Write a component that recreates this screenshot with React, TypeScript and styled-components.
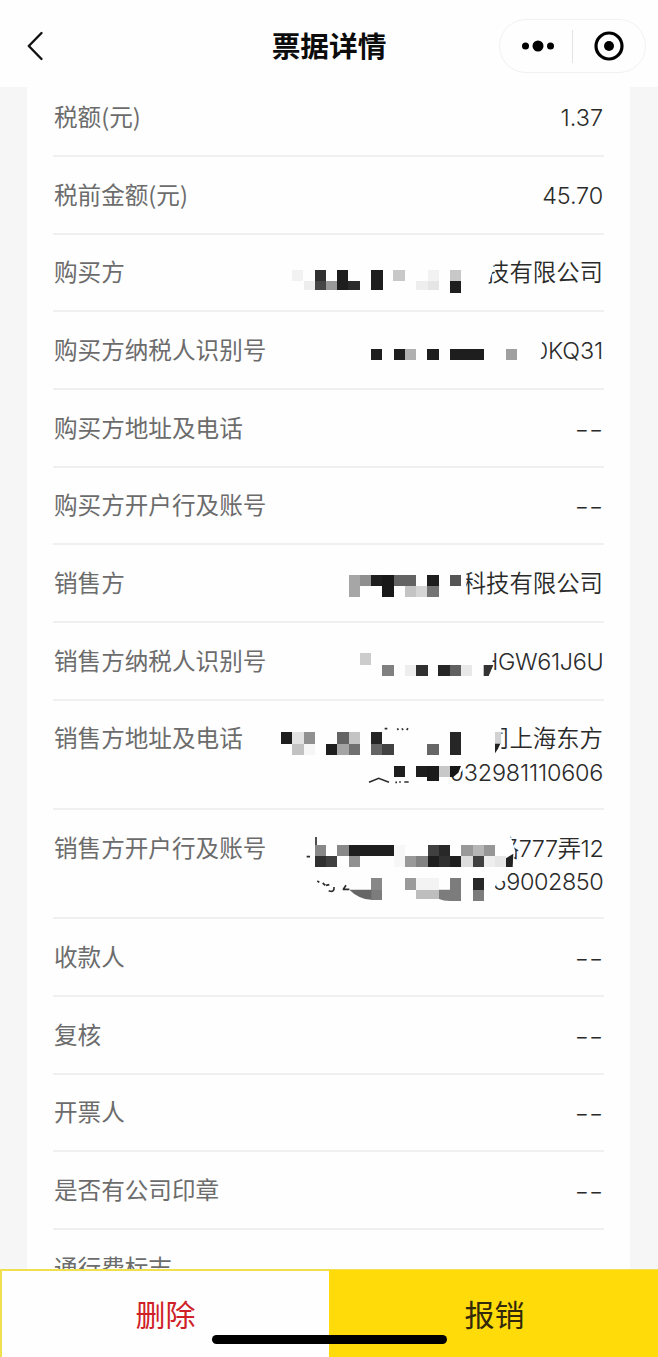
import React from 'react';
import styled, { createGlobalStyle } from 'styled-components';

const GlobalStyle = createGlobalStyle`
  * { box-sizing: border-box; }
  body { margin: 0; background: #f6f6f6; font-family: Inter, "Noto Sans CJK SC", sans-serif; }
`;

const Screen = styled.div`
  display: flex;
  flex-direction: column;
  height: 1357px;
  overflow: hidden;
  background: #f6f6f6;
`;

const Header = styled.header`
  display: grid;
  grid-template-columns: 1fr auto 1fr;
  align-items: center;
  flex: none;
  height: 87px;
  padding: 5px 12px 0 12px;
  background: #fefefe;
`;

const BackButton = styled.button`
  display: flex;
  width: 20px;
  margin-left: 14px;
  padding: 0;
  border: 0;
  background: none;
`;

const Title = styled.h1`
  margin: 0;
  padding-top: 2px;
  font-size: 28.7px;
  line-height: 40px;
  font-weight: 600;
  color: #0c0c0c;
`;

const Capsule = styled.div`
  display: flex;
  align-items: center;
  justify-self: end;
  width: 147px;
  height: 54px;
  border: 1px solid #f1f1f1;
  border-radius: 27px;
`;

const CapsuleButton = styled.button`
  display: flex;
  flex: 0 0 72px;
  align-items: center;
  justify-content: center;
  padding: 0;
  border: 0;
  background: none;

  &:first-child { padding-left: 4px; }
`;

const CapsuleDivider = styled.span`
  width: 1px;
  height: 33px;
  background: #e3e3e3;
`;

const Card = styled.main`
  flex: 1;
  min-height: 0;
  margin: 0 28px 0 27px;
  padding: 0 26px;
  overflow: hidden;
  background: #fefefe;
`;

const Row = styled.div<{ $first?: boolean }>`
  position: relative;
  display: flex;
  justify-content: space-between;
  min-height: ${(p) => (p.$first ? 70 : 77.68)}px;
  padding: ${(p) => (p.$first ? 13 : 20.7)}px 0 19.2px;
  border-bottom: 2px solid #f0f0f0;
`;

const Label = styled.span`
  padding-left: 1px;
  font-family: "Noto Sans CJK SC", sans-serif;
  font-size: 23.6px;
  line-height: 33.2px;
  color: #6c6c6c;
`;

const Value = styled.span`
  display: flex;
  flex-direction: column;
  align-items: flex-end;
  padding: 1px 1px 0 0;
  font-size: 23.4px;
  font-weight: 350;
  line-height: 33.2px;
  color: #2a2a2a;
  white-space: nowrap;
`;

const Line = styled.span<{ $spacing: number }>`
  margin-right: ${(p) => p.$spacing}px;
  letter-spacing: ${(p) => p.$spacing}px;
`;

const EmptyMark = styled.span`
  padding-top: 1px;
  transform: scaleX(1.34);
  transform-origin: right;
`;

const Mosaic = styled.svg<{ $top: number }>`
  position: absolute;
  right: -16px;
  top: ${(p) => p.$top}px;
`;

const Footer = styled.footer`
  position: relative;
  display: flex;
  flex: none;
  height: 88px;
`;

const Action = styled.button<{ $primary?: boolean }>`
  flex: none;
  width: 50%;
  padding: ${(p) => (p.$primary ? '0 0 2px 2px' : '0 0 3px')};
  border: 0 solid #f0df4e;
  border-width: ${(p) => (p.$primary ? '1px 0 0' : '2px 0 0 2px')};
  background: ${(p) => (p.$primary ? '#ffdb0a' : '#fefefe')};
  color: ${(p) => (p.$primary ? '#33290a' : '#cf2027')};
  font-family: "Noto Sans CJK SC", sans-serif;
  font-size: 30px;
  line-height: 40px;
`;

const HomeIndicator = styled.span`
  position: absolute;
  left: 212px;
  bottom: 13px;
  width: 235px;
  height: 9px;
  border-radius: 5px;
  background: #000;
`;

/* x, y, width, height, fill; three units to a pixel */
type Cell = [number, number, number, number, string];

interface Redaction {
  width: number;
  height: number;
  top: number;
  covers: string[];
  cells: Cell[];
  strokes?: string;
  shapes?: [string, string][];
}

interface Entry {
  label: string;
  lines: string[];
  spacing?: number[];
  redaction?: Redaction;
}

const D = '#1e1e1e';

const buyer: Redaction = {
  width: 350, height: 70, top: 0.5,
  covers: ['M630 60H668L671 100L660 132L650 160H630Z'],
  cells: [
    [66, 105, 34, 33, '#f2f2f2'], [101, 138, 34, 26, '#eeeeee'],
    [135, 105, 33, 33, '#303030'], [135, 138, 33, 26, '#464646'],
    [168, 138, 34, 26, '#999999'], [202, 105, 33, 59, D], [235, 138, 35, 26, '#2a2a2a'],
    [303, 105, 35, 59, D], [370, 105, 35, 33, '#c8c8c8'],
    [438, 138, 35, 26, '#eeeeee'], [473, 105, 33, 33, '#f2f2f2'], [473, 138, 33, 26, '#e5e5e5'],
    [540, 105, 34, 33, '#c8c8c8'], [540, 138, 34, 35, D],
  ],
};

const buyerTax: Redaction = {
  width: 270, height: 70, top: 7.8,
  covers: ['M520 50H572L578 78L576 105L567 130H520Z'],
  cells: [
    [63, 87, 34, 33, D], [131, 87, 34, 33, D], [165, 87, 33, 33, '#b0b0b0'],
    [232, 87, 34, 33, D], [300, 87, 101, 33, D], [468, 87, 34, 33, '#a0a0a0'],
  ],
};

const seller: Redaction = {
  width: 290, height: 60, top: 10.3,
  covers: ['M380 40H409V125H380Z'],
  cells: [
    [56, 57, 34, 66, '#a6a6a6'], [90, 57, 33, 33, '#8f8f8f'], [123, 57, 34, 33, D],
    [157, 57, 34, 66, '#181818'], [191, 57, 67, 33, '#636363'],
    [225, 90, 33, 33, '#c4c4c4'], [258, 90, 34, 33, '#d5d5d5'],
    [292, 57, 34, 33, D], [292, 90, 34, 33, '#747474'], [360, 57, 33, 33, '#555555'],
  ],
};

const sellerTax: Redaction = {
  width: 280, height: 60, top: 12.6,
  covers: ['M400 35H458V120H400Z'],
  cells: [
    [60, 52, 34, 34, '#cccccc'], [127, 87, 34, 33, '#808080'],
    [195, 87, 33, 33, '#eeeeee'], [228, 87, 35, 33, '#303030'],
    [295, 87, 35, 33, '#262626'], [330, 87, 33, 33, '#606060'], [363, 87, 33, 33, '#e8e8e8'],
  ],
  shapes: [['M431 87H460L446 120H431Z', '#333333']],
};

const sellerAddress: Redaction = {
  width: 360, height: 80, top: 14.8,
  covers: ['M640 20H724V100H640Z', 'M530 135H616L606 165L594 178L574 160H530Z'],
  cells: [
    [63, 48, 34, 35, D], [97, 48, 34, 35, '#e2e2e2'], [131, 48, 34, 35, '#909090'],
    [97, 83, 34, 34, '#c2c2c2'], [131, 83, 34, 34, '#f6f6f6'],
    [198, 83, 34, 34, D], [232, 48, 34, 35, '#646464'], [266, 48, 34, 35, '#c4c4c4'],
    [232, 83, 34, 34, '#a4a4a4'], [266, 83, 34, 34, '#707070'],
    [333, 48, 34, 35, '#242424'], [333, 83, 34, 34, '#646464'], [367, 83, 34, 34, '#424242'],
    [502, 83, 34, 34, '#666666'], [570, 48, 34, 69, '#262626'], [705, 48, 18, 35, '#d2d2d2'],
    [401, 150, 34, 33, D], [468, 150, 34, 33, D], [502, 150, 34, 45, '#1a1a1a'],
    [536, 150, 34, 33, '#c8c8c8'],
  ],
  shapes: [['M705 83H721L714 98L705 112Z', '#222222'], ['M570 150H603L595 170L580 183H570Z', '#161616']],
  strokes: 'M327 199L356 187L387 199M374 38H382M412 37L415 42M426 37L429 42M440 42L444 37M406 199H411M420 196V200M433 198H446',
};

const sellerBank: Redaction = {
  width: 330, height: 90, top: 10.6,
  covers: ['M600 30H652L667 60L676 92L668 140H600Z', 'M585 145H660L648 178L622 184L606 215H585Z'],
  cells: [
    [75, 72, 33, 33, '#888888'], [75, 105, 34, 33, '#303030'], [108, 105, 34, 33, '#404040'],
    [142, 72, 34, 33, '#888888'], [176, 72, 135, 33, D], [176, 105, 34, 33, '#909090'],
    [311, 72, 34, 66, '#f7f7f7'], [345, 105, 34, 33, '#999999'], [379, 105, 34, 33, '#828282'],
    [413, 72, 34, 33, '#404040'], [447, 72, 33, 33, '#282828'],
    [413, 105, 34, 33, D], [447, 105, 33, 33, '#303030'], [480, 105, 34, 33, D],
    [514, 72, 34, 33, '#999999'], [548, 72, 33, 33, '#b6b6b6'], [581, 72, 34, 33, '#969696'],
    [514, 105, 34, 33, '#dddddd'], [548, 105, 33, 33, '#404040'], [581, 105, 34, 33, '#eeeeee'],
    [615, 105, 33, 33, '#e6e6e6'],
    [244, 172, 33, 34, '#888888'], [244, 206, 33, 30, '#7c7c7c'],
    [345, 172, 34, 34, '#9a9a9a'], [379, 172, 67, 34, '#f3f3f3'], [379, 206, 68, 28, '#bebebe'],
    [480, 172, 34, 68, '#7c7c7c'], [548, 172, 33, 34, '#282828'], [548, 206, 33, 34, '#7c7c7c'],
  ],
  shapes: [
    ['M178 206H244V236Q205 234 178 206Z', '#666666'],
    ['M447 206H480V240Q460 240 447 234Z', '#7c7c7c'],
    ['M648 112L670 98L668 138H648Z', '#222222'],
  ],
  strokes: 'M78 48V72M50 107H60M82 180L88 184M98 186L106 193M108 193L118 191M116 209Q134 216 132 198M160 205L168 193M158 205H178',
};

const entries: Entry[] = [
  { label: '税额(元)', lines: ['1.37'] },
  { label: '税前金额(元)', lines: ['45.70'], spacing: [-0.1] },
  { label: '购买方', lines: ['技有限公司'], redaction: buyer },
  { label: '购买方纳税人识别号', lines: ['0KQ31'], spacing: [-0.1], redaction: buyerTax },
  { label: '购买方地址及电话', lines: [] },
  { label: '购买方开户行及账号', lines: [] },
  { label: '销售方', lines: ['科技有限公司'], redaction: seller },
  { label: '销售方纳税人识别号', lines: ['HGW61J6U'], spacing: [-0.35], redaction: sellerTax },
  { label: '销售方地址及电话', lines: ['司上海东方', '032981110606'], spacing: [0, -0.2], redaction: sellerAddress },
  { label: '销售方开户行及账号', lines: ['路777弄12', '69002850'], spacing: [-0.4, -0.4], redaction: sellerBank },
  { label: '收款人', lines: [] },
  { label: '复核', lines: [] },
  { label: '开票人', lines: [] },
  { label: '是否有公司印章', lines: [] },
  { label: '通行费标志', lines: [] },
];

function RedactionMosaic({ data }: { data: Redaction }) {
  return (
    <Mosaic
      $top={data.top}
      width={data.width}
      height={data.height}
      viewBox={`0 0 ${data.width * 3} ${data.height * 3}`}
      aria-hidden="true"
    >
      {data.covers.map((d) => <path key={d} d={d} fill="#fefefe" />)}
      <g shapeRendering="crispEdges">
        {data.cells.map(([x, y, w, h, fill]) => (
          <rect key={`${x}-${y}`} x={x} y={y} width={w} height={h} fill={fill} />
        ))}
      </g>
      {data.shapes?.map(([d, fill]) => <path key={d} d={d} fill={fill} />)}
      {data.strokes && <path d={data.strokes} fill="none" stroke="#2c2c2c" strokeWidth="5" />}
    </Mosaic>
  );
}

export default function App() {
  return (
    <>
      <GlobalStyle />
      <Screen>
        <Header>
          <BackButton aria-label="返回">
            <svg width="20" height="30" viewBox="0 0 20 30" fill="none">
              <path d="M15.5 2L2.8 15L15.5 28" stroke="#111" strokeWidth="2.4" strokeLinecap="round" strokeLinejoin="round" />
            </svg>
          </BackButton>
          <Title>票据详情</Title>
          <Capsule>
            <CapsuleButton aria-label="更多">
              <svg width="34" height="14" viewBox="0 0 34 14">
                <circle cx="4.5" cy="7" r="3.5" />
                <circle cx="17" cy="7" r="5.5" />
                <circle cx="29.5" cy="7" r="3.5" />
              </svg>
            </CapsuleButton>
            <CapsuleDivider />
            <CapsuleButton aria-label="关闭">
              <svg width="32" height="32" viewBox="0 0 32 32">
                <circle cx="16" cy="16" r="13" fill="none" stroke="#000" strokeWidth="3.2" />
                <circle cx="16" cy="16" r="5" />
              </svg>
            </CapsuleButton>
          </Capsule>
        </Header>
        <Card>
          {entries.map((entry, i) => (
            <Row key={entry.label} $first={i === 0}>
              <Label>{entry.label}</Label>
              <Value>
                {entry.lines.map((line, n) => (
                  <Line key={n} $spacing={entry.spacing?.[n] ?? 0}>{line}</Line>
                ))}
                {entry.lines.length === 0 && i < entries.length - 1 && <EmptyMark>--</EmptyMark>}
              </Value>
              {entry.redaction && <RedactionMosaic data={entry.redaction} />}
            </Row>
          ))}
        </Card>
        <Footer>
          <Action>删除</Action>
          <Action $primary>报销</Action>
          <HomeIndicator />
        </Footer>
      </Screen>
    </>
  );
}
